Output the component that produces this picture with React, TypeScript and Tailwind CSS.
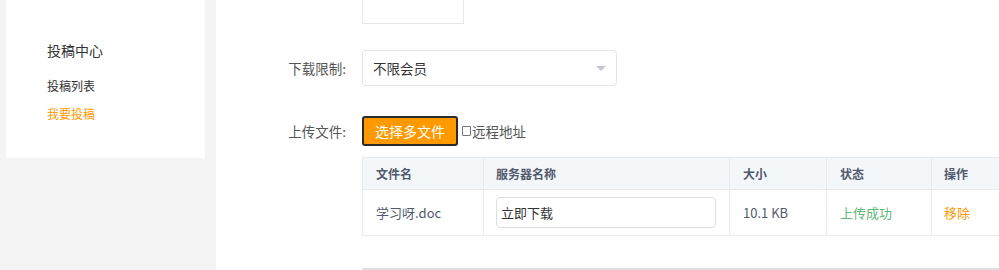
export default function App() {
  const font = { fontFamily: '"Noto Sans CJK SC", "Noto Sans", sans-serif' };
  return (
    <div className="flex h-[270px] w-[999px] overflow-hidden bg-[#f4f4f4]" style={font}>
      {/* Sidebar */}
      <div className="ml-[6px] h-[158px] w-[199px] shrink-0 bg-white pl-[41px] pt-[40px]">
        <div className="text-[14px] leading-[20px] text-[#333]">投稿中心</div>
        <div className="mt-[17px] text-[12px] leading-[18px] text-[#333]">投稿列表</div>
        <div className="mt-[10px] text-[12px] leading-[18px] text-[#ff9900]">我要投稿</div>
      </div>

      {/* Main panel */}
      <div className="ml-[11px] flex-1 overflow-hidden bg-white">
        <div className="ml-[146px] h-[24px] w-[102px] border border-t-0 border-[#e8e8e8]" />

        <div className="mt-[26px] flex items-center">
          <div className="w-[146px] pr-[16px] text-right text-[13.5px] text-[#555]">下载限制:</div>
          <div className="flex h-[36px] w-[255px] items-center justify-between rounded-[4px] border border-[#e3e5e8] pl-[10px] pr-[10px]">
            <span className="text-[13.5px] text-[#333]">不限会员</span>
            <span className="h-0 w-0 border-l-[5px] border-r-[5px] border-t-[5px] border-l-transparent border-r-transparent border-t-[#c5c8ce]" />
          </div>
        </div>

        <div className="mt-[30px] flex items-center">
          <div className="w-[146px] pr-[16px] text-right text-[13.5px] text-[#555]">上传文件:</div>
          <button className="h-[30px] w-[96px] rounded-[3px] border-2 border-[#2b2b2b] bg-[#ff9900] text-[14px] text-white">
            选择多文件
          </button>
          <span className="ml-[4px] inline-block h-[10px] w-[9px] rounded-[1px] border border-[#777]" />
          <span className="ml-[1px] text-[13.5px] text-[#555]">远程地址</span>
        </div>

        <div className="ml-[146px] mt-[11px] w-[760px] border-b border-l border-t border-[#e8eaec] text-[12px] text-[#515a6e]">
          <div className="grid h-[31px] grid-cols-[121px_246px_97px_105px_191px] bg-[#f4f7fa] font-bold">
            <div className="flex items-center border-r border-[#e8eaec] pl-[13px]">文件名</div>
            <div className="flex items-center border-r border-[#e8eaec] pl-[12px]">服务器名称</div>
            <div className="flex items-center border-r border-[#e8eaec] pl-[13px]">大小</div>
            <div className="flex items-center border-r border-[#e8eaec] pl-[13px]">状态</div>
            <div className="flex items-center pl-[12px]">操作</div>
          </div>
          <div className="grid h-[46px] grid-cols-[121px_246px_97px_105px_191px] border-t border-[#e8eaec]">
            <div className="flex items-center border-r border-[#e8eaec] pl-[13px] text-[13px]">学习呀.doc</div>
            <div className="flex items-center border-r border-[#e8eaec] pl-[12px]">
              <div className="flex h-[31px] w-[220px] items-center rounded-[4px] border border-[#dcdee2] pl-[4px] text-[13px] text-[#333]">
                立即下载
              </div>
            </div>
            <div className="flex items-center border-r border-[#e8eaec] pl-[13px] text-[13px]">10.1 KB</div>
            <div className="flex items-center border-r border-[#e8eaec] pl-[13px] text-[13px] text-[#5fb878]">上传成功</div>
            <div className="flex items-center pl-[12px] text-[13px] text-[#ff9900]">移除</div>
          </div>
        </div>

        <div className="ml-[146px] mt-[32px] h-[2px] w-[700px] bg-[#e0e0e0]" />
      </div>
    </div>
  );
}
